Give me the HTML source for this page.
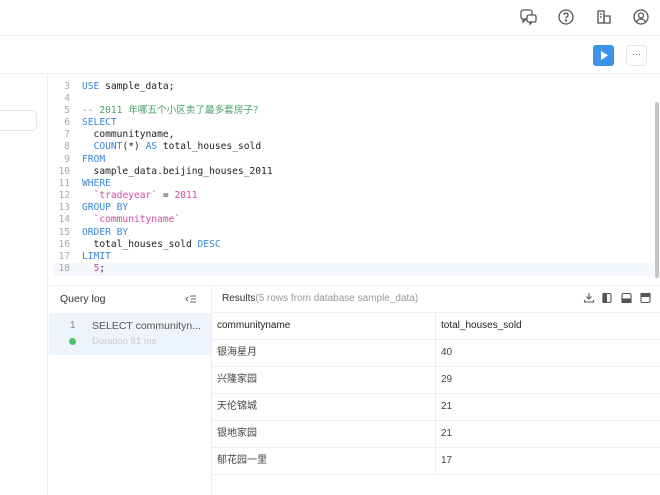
<!DOCTYPE html>
<html><head><meta charset="utf-8"><style>
*{box-sizing:border-box;margin:0;padding:0}
body{width:660px;height:495px;overflow:hidden;background:#fff;font-family:"Liberation Sans","Noto Sans CJK SC",sans-serif;position:relative;color:#333}
.abs{position:absolute}
.code{font-family:"DejaVu Sans Mono","Liberation Mono","Noto Sans CJK SC",monospace;font-size:9.6px;line-height:12px}
.ln{position:absolute;left:50px;width:20px;text-align:right;color:#aaa;height:12px;line-height:12px}
.tx{position:absolute;left:82px;color:#222;white-space:pre;height:12px;line-height:12px}
.k{color:#3a86d4}.s{color:#d04aa0}.c{color:#4aa06a}
.hl{border-bottom:1px solid #eceef1}
.cell{position:absolute;font-size:10px;color:#444;height:27px;line-height:27px;white-space:nowrap}
</style></head><body>
<div class="abs" style="left:0;top:35px;width:660px;height:1px;background:#eef0f2"></div>
<svg class="abs" style="left:519px;top:7px" width="20" height="20" viewBox="0 0 20 20" fill="none" stroke="#555" stroke-width="1.3"><rect x="2" y="3" width="11" height="9" rx="2"/><path d="M4 12v3l3-3"/><rect x="8" y="8" width="9" height="7" rx="1.5" fill="#fff"/><path d="M11 15v2l2-2"/></svg>
<svg class="abs" style="left:557px;top:8px" width="18" height="18" viewBox="0 0 18 18" fill="none" stroke="#555" stroke-width="1.3"><circle cx="9" cy="9" r="7"/><path d="M7 7a2 2 0 1 1 2.5 2c-.5.3-.5.7-.5 1.5"/><circle cx="9" cy="12.5" r=".5" fill="#555"/></svg>
<svg class="abs" style="left:595px;top:8px" width="18" height="18" viewBox="0 0 18 18" fill="none" stroke="#555" stroke-width="1.3"><rect x="3" y="3" width="6" height="12"/><rect x="9" y="8" width="6" height="7"/><path d="M5 6h2M5 9h2"/></svg>
<svg class="abs" style="left:632px;top:8px" width="18" height="18" viewBox="0 0 18 18" fill="none" stroke="#555" stroke-width="1.3"><circle cx="9" cy="9" r="7"/><circle cx="9" cy="7.5" r="2.5"/><path d="M4.5 14c1-2 2.5-3 4.5-3s3.5 1 4.5 3"/></svg>
<div class="abs" style="left:593px;top:45px;width:21px;height:21px;background:#3d93e6;border-radius:3px"></div>
<svg class="abs" style="left:599px;top:50px" width="10" height="11"><path d="M2 1l7 4.5L2 10z" fill="#fff"/></svg>
<div class="abs" style="left:626px;top:45px;width:21px;height:21px;border:1px solid #e4e6ea;border-radius:4px;font-size:9px;text-align:center;line-height:17px;color:#555">···</div>
<div class="abs" style="left:0;top:73px;width:660px;height:1px;background:#eef0f2"></div>
<div class="abs" style="left:0;top:74px;width:48px;height:421px;background:#fff;border-right:1px solid #eceef1"></div>
<div class="abs" style="left:-6px;top:110px;width:43px;height:21px;border:1px solid #e1e3e6;border-radius:5px"></div>
<div class="abs" style="left:54px;top:263px;width:600px;height:13px;background:#f4f8fc"></div>
<div class="abs" style="left:655px;top:102px;width:4px;height:176px;background:#c4c4c4;border-radius:2px"></div>
<div class="code">
<div class="ln" style="top:81px">3</div><div class="tx" style="top:81px"><span class="k">USE</span> sample_data;</div>
<div class="ln" style="top:93px">4</div>
<div class="ln" style="top:105px">5</div><div class="tx c" style="top:105px">-- 2011 年哪五个小区卖了最多套房子?</div>
<div class="ln" style="top:117px">6</div><div class="tx k" style="top:117px">SELECT</div>
<div class="ln" style="top:129px">7</div><div class="tx" style="top:129px">  communityname,</div>
<div class="ln" style="top:141px">8</div><div class="tx" style="top:141px">  <span class="k">COUNT</span>(*) <span class="k">AS</span> total_houses_sold</div>
<div class="ln" style="top:154px">9</div><div class="tx k" style="top:154px">FROM</div>
<div class="ln" style="top:166px">10</div><div class="tx" style="top:166px">  sample_data.beijing_houses_2011</div>
<div class="ln" style="top:178px">11</div><div class="tx k" style="top:178px">WHERE</div>
<div class="ln" style="top:190px">12</div><div class="tx" style="top:190px">  <span class="s">`tradeyear`</span> = <span class="s">2011</span></div>
<div class="ln" style="top:202px">13</div><div class="tx k" style="top:202px">GROUP BY</div>
<div class="ln" style="top:214px">14</div><div class="tx s" style="top:214px">  `communityname`</div>
<div class="ln" style="top:227px">15</div><div class="tx k" style="top:227px">ORDER BY</div>
<div class="ln" style="top:239px">16</div><div class="tx" style="top:239px">  total_houses_sold <span class="k">DESC</span></div>
<div class="ln" style="top:251px">17</div><div class="tx k" style="top:251px">LIMIT</div>
<div class="ln" style="top:263px">18</div><div class="tx" style="top:263px">  <span class="s">5</span>;</div>
</div>
<div class="abs" style="left:49px;top:285px;width:611px;height:1px;background:#eceef1"></div>
<div class="abs" style="left:211px;top:286px;width:1px;height:209px;background:#eceef1"></div>
<div class="abs" style="left:60px;top:293px;font-size:10.5px;color:#333">Query log</div>
<svg class="abs" style="left:185px;top:294px" width="11" height="10" fill="none" stroke="#666" stroke-width="1"><path d="M5 2h6M6 5h5M5 8h6M3 3L1 5l2 2"/></svg>
<div class="abs" style="left:49px;top:313px;width:162px;height:42px;background:#eef4fb"></div>
<div class="abs" style="left:70px;top:320px;font-size:10px;color:#888">1</div>
<div class="abs" style="left:92px;top:320px;font-size:10.5px;color:#555">SELECT communityn...</div>
<div class="abs" style="left:69px;top:338px;width:7px;height:7px;border-radius:50%;background:#4cc26a"></div>
<div class="abs" style="left:92px;top:336px;font-size:9.5px;color:#c8ccd2">Duration 81 ms</div>
<div class="abs" style="left:222px;top:293px;font-size:10px;color:#333">Results<span style="color:#999">(5 rows from database sample_data)</span></div>
<svg class="abs" style="left:583px;top:292px" width="70" height="12" fill="none" stroke="#555" stroke-width="1.1"><path d="M6 1v6M3.5 4.5L6 7l2.5-2.5M1.5 8v2h9V8"/><rect x="20" y="1.5" width="8" height="9" rx="1.5"/><rect x="20" y="1.5" width="3.5" height="9" fill="#555"/><rect x="39" y="1.5" width="9" height="9" rx="1.5"/><rect x="39" y="7" width="9" height="3.5" fill="#555"/><rect x="58" y="1.5" width="9" height="9" rx="1.5"/><rect x="58" y="1.5" width="9" height="3" fill="#555"/></svg>
<div class="abs" style="left:212px;top:312px;width:448px;height:1px;background:#eceef1"></div>
<div class="abs" style="left:435px;top:313px;width:1px;height:162px;background:#eceef1"></div>
<div class="abs hl" style="left:212px;top:313px;width:448px;height:27px"></div>
<div class="abs hl" style="left:212px;top:340px;width:448px;height:27px"></div>
<div class="abs hl" style="left:212px;top:367px;width:448px;height:27px"></div>
<div class="abs hl" style="left:212px;top:394px;width:448px;height:27px"></div>
<div class="abs hl" style="left:212px;top:421px;width:448px;height:27px"></div>
<div class="abs hl" style="left:212px;top:448px;width:448px;height:27px"></div>
<div class="cell" style="left:217px;top:312px;color:#222">communityname</div>
<div class="cell" style="left:441px;top:312px;color:#222">total_houses_sold</div>
<div class="cell" style="left:217px;top:339px">银海星月</div><div class="cell" style="left:441px;top:339px">40</div>
<div class="cell" style="left:217px;top:366px">兴隆家园</div><div class="cell" style="left:441px;top:366px">29</div>
<div class="cell" style="left:217px;top:393px">天伦锦城</div><div class="cell" style="left:441px;top:393px">21</div>
<div class="cell" style="left:217px;top:420px">银地家园</div><div class="cell" style="left:441px;top:420px">21</div>
<div class="cell" style="left:217px;top:447px">郁花园一里</div><div class="cell" style="left:441px;top:447px">17</div>
</body></html>
